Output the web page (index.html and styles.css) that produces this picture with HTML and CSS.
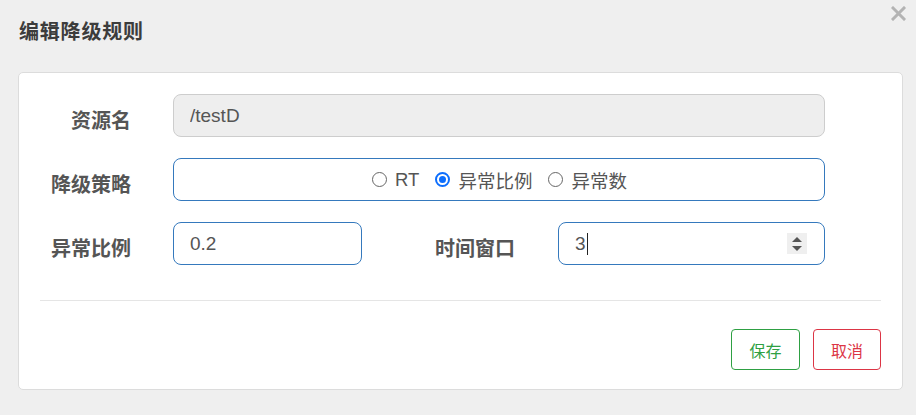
FILE: index.html
```html
<!DOCTYPE html>
<html lang="zh">
<head>
<meta charset="utf-8">
<title>编辑降级规则</title>
<link rel="stylesheet" href="styles.css">
</head>
<body>
<div class="dialog">
  <div class="dialog-header">
    <h3 class="dialog-title">编辑降级规则</h3>
    <button class="close-btn" aria-label="关闭">
      <svg width="15" height="15" viewBox="0 0 15 15"><path d="M2 2L13 13M13 2L2 13" stroke="#b3b3b3" stroke-width="3" stroke-linecap="square"/></svg>
    </button>
  </div>
  <div class="card">
    <div class="form-row">
      <label class="form-label">资源名</label>
      <input class="field field-disabled field-wide" type="text" value="/testD" disabled>
    </div>
    <div class="form-row">
      <label class="form-label">降级策略</label>
      <div class="field field-wide radio-group">
        <label class="radio-item"><span class="radio"></span>RT</label>
        <label class="radio-item"><span class="radio radio-checked"></span>异常比例</label>
        <label class="radio-item"><span class="radio"></span>异常数</label>
      </div>
    </div>
    <div class="form-row">
      <label class="form-label">异常比例</label>
      <input class="field field-short" type="text" value="0.2">
      <label class="form-label form-label-second">时间窗口</label>
      <div class="field field-number">
        <span>3</span><span class="caret"></span>
        <span class="spinner">
          <svg width="20" height="21" viewBox="0 0 20 21"><path d="M5 9L10 4L15 9Z" fill="#555"/><path d="M5 13L10 18L15 13Z" fill="#555"/></svg>
        </span>
      </div>
    </div>
    <div class="divider"></div>
    <div class="actions">
      <button class="btn btn-save">保存</button>
      <button class="btn btn-cancel">取消</button>
    </div>
  </div>
</div>
</body>
</html>
```

FILE: styles.css
```css
* { box-sizing: border-box; }
html, body { margin: 0; padding: 0; }
body {
  background: #efefef;
  font-family: "Liberation Sans", "Noto Sans CJK SC", sans-serif;
  width: 916px;
  height: 415px;
  overflow: hidden;
}
.dialog { position: relative; padding: 0 13px 0 18px; }
.dialog-header { height: 72px; display: flex; align-items: center; }
.dialog-title {
  margin: 0 0 12px 1px;
  font-size: 20px;
  font-weight: bold;
  color: #3c3c3c;
  font-family: "Noto Sans CJK SC", sans-serif;
  letter-spacing: 0.8px;
}
.close-btn {
  position: absolute;
  top: 6px;
  right: 10px;
  border: 0;
  background: none;
  padding: 0;
  width: 15px;
  height: 15px;
  display: block;
}
.close-btn svg { display: block; }
.card {
  background: #fff;
  border: 1px solid #dcdcdc;
  border-radius: 5px;
  height: 318px;
  padding: 21px 21px 19px 21px;
  display: flex;
  flex-direction: column;
}
.form-row {
  display: flex;
  align-items: flex-start;
  height: 43px;
  margin-bottom: 21px;
}
.form-row:nth-child(3) { margin-bottom: 0; }
.form-label {
  width: 91px;
  height: 43px;
  padding-top: 8px;
  margin-right: 42px;
  display: flex;
  align-items: center;
  justify-content: flex-end;
  font-family: "Noto Sans CJK SC", sans-serif;
  font-size: 20px;
  font-weight: bold;
  color: #555;
}
.form-label-second { width: 153px; margin-left: 0; margin-right: 43px; }
.field {
  height: 43px;
  border: 1px solid #3579bd;
  border-radius: 8px;
  background: #fff;
  padding: 0 16px;
  font-family: "Liberation Sans", "Noto Sans CJK SC", sans-serif;
  font-size: 19px;
  color: #555;
  outline: none;
  display: flex;
  align-items: center;
}
.field-wide { width: 652px; }
.field-short { width: 189px; }
.field-number { width: 267px; padding-right: 17px; }
.field-disabled { background: #eee; border-color: #cdcdcd; color: #555; }
input.field { display: block; }
.radio-group { justify-content: center; gap: 16px; padding: 0; padding-left: 1px; font-size: 18.5px; }
.radio-item { display: inline-flex; align-items: center; gap: 8px; color: #555; }
.radio {
  width: 15px;
  height: 15px;
  border: 1px solid #666;
  border-radius: 50%;
  display: inline-block;
  position: relative;
}
.radio-checked { border: 2px solid #0d6efd; }
.radio-checked::after {
  content: "";
  position: absolute;
  left: 2px;
  top: 2px;
  width: 7px;
  height: 7px;
  border-radius: 50%;
  background: #0d6efd;
}
.caret { width: 1px; height: 22px; background: #222; margin-left: 1px; }
.spinner {
  margin-left: auto;
  width: 20px;
  height: 21px;
  background: #efefef;
  display: block;
}
.spinner svg { display: block; }
.divider { height: 1px; background: #e5e5e5; margin-top: 35px; }
.actions {
  margin-top: 28px;
  display: flex;
  justify-content: flex-end;
  gap: 13px;
}
.btn {
  height: 41px;
  padding: 0;
  border-radius: 4px;
  background: #fff;
  font-family: "Noto Sans CJK SC", sans-serif;
  font-size: 16px;
}
.btn-save { width: 69px; border: 1px solid #2ea043; color: #2ea043; }
.btn-cancel { width: 68px; border: 1px solid #dc3545; color: #dc3545; }
```
